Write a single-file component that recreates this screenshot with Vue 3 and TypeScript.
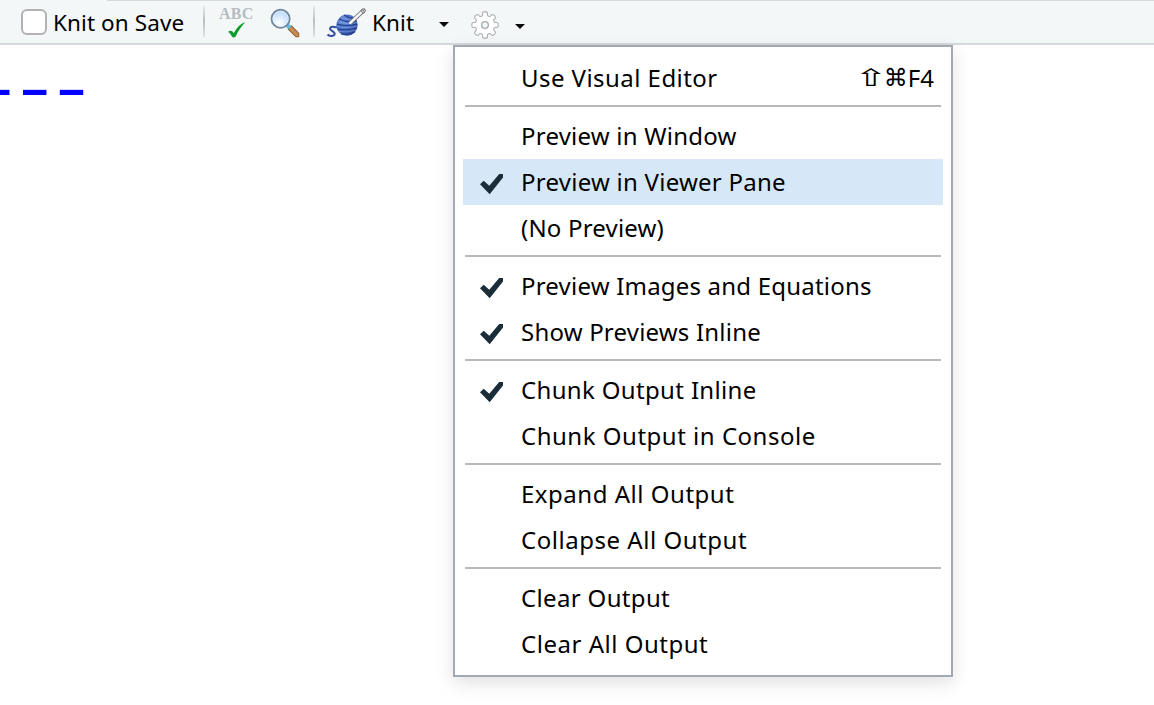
<script setup lang="ts">
interface MenuItem {
  label: string
  shortcut?: string
  checked?: boolean
  active?: boolean
  spacing: number
}

const groups: MenuItem[][] = [
  [{ label: 'Use Visual Editor', shortcut: 'F4', spacing: 0.45 }],
  [
    { label: 'Preview in Window', spacing: 0.22 },
    { label: 'Preview in Viewer Pane', checked: true, active: true, spacing: 0.25 },
    { label: '(No Preview)', spacing: 0.19 },
  ],
  [
    { label: 'Preview Images and Equations', checked: true, spacing: 0.2 },
    { label: 'Show Previews Inline', checked: true, spacing: 0.2 },
  ],
  [
    { label: 'Chunk Output Inline', checked: true, spacing: 0.34 },
    { label: 'Chunk Output in Console', spacing: 0.51 },
  ],
  [
    { label: 'Expand All Output', spacing: 0.52 },
    { label: 'Collapse All Output', spacing: 0.53 },
  ],
  [
    { label: 'Clear Output', spacing: 0.34 },
    { label: 'Clear All Output', spacing: 0.52 },
  ],
]

// Eight-toothed outline centred on the origin, with rounded teeth.
function gearPath(): string {
  let d = ''
  for (let i = 0; i < 8; i++) {
    const base = (i * Math.PI) / 4 - Math.PI / 2
    const pt = (r: number, a: number) =>
      `${(r * Math.cos(base + a)).toFixed(2)} ${(r * Math.sin(base + a)).toFixed(2)}`
    d += `${i ? 'L' : 'M'}${pt(11.2, -0.22)} Q${pt(13.1, -0.22)} ${pt(13.2, -0.08)} L${pt(13.2, 0.08)} Q${pt(13.1, 0.22)} ${pt(11.2, 0.22)} Q${pt(9.2, 0.26)} ${pt(9.6, 0.393)} Q${pt(9.2, 0.525)} ${pt(11.2, 0.565)}`
  }
  return d + 'Z'
}
const gear = gearPath()
</script>

<template>
  <div class="page">
    <header class="toolbar">
      <label class="save"><span class="box"></span><span class="tool-text save-text">Knit on Save</span></label>
      <i class="divider first"></i>
      <div class="spell">
        <span>ABC</span>
        <svg width="18" height="16" viewBox="0 0 18 16"><path d="M0 10C2.2 8 4 8.6 5.8 11.2C8.6 5.8 12 2 17.4 0C13 4.8 9.8 9.5 7.7 14.6C5.8 16 4.4 15.6 3.6 14.1C2.6 12 1.8 10.8 0 10Z" fill="#0b9b2b" /></svg>
      </div>
      <svg class="glass" width="30" height="30" viewBox="0 0 30 30">
        <defs>
          <radialGradient id="lens" cx=".4" cy=".75" r=".7"><stop offset="0" stop-color="#fff" /><stop offset="1" stop-color="#b9d9fb" /></radialGradient>
          <linearGradient id="wood" x1="0" y1="1" x2="1" y2="0"><stop offset="0" stop-color="#6b3a12" /><stop offset=".5" stop-color="#d19155" /><stop offset="1" stop-color="#7b4215" /></linearGradient>
        </defs>
        <path d="M16.5 16.5L20 20" stroke="#69bad8" stroke-width="4" />
        <path d="M18 21.2L21.5 17.7L28.8 25.2V28.8H25.8Z" fill="url(#wood)" stroke="#75401a" stroke-width=".8" />
        <path d="M18.1 20.4L20.8 17.6" stroke="#4ec5e8" stroke-width="1.5" />
        <circle cx="10.6" cy="10.8" r="9" fill="url(#lens)" stroke="#71879e" stroke-width="2" />
        <circle cx="10.6" cy="10.8" r="7.7" fill="none" stroke="#e8f4ff" stroke-width=".8" />
      </svg>
      <i class="divider second"></i>
      <svg class="yarn" width="42" height="32" viewBox="0 0 42 32">
        <defs><radialGradient id="ball" cx=".35" cy=".3" r=".8"><stop offset="0" stop-color="#7099e2" /><stop offset=".6" stop-color="#4368bd" /><stop offset="1" stop-color="#263f8c" /></radialGradient></defs>
        <path d="M1.5 27.5C4 30.3 10.2 28.5 8.4 25.8C6.6 23.6 2.4 22.7 4.6 20.4C7 18.3 9.6 21.5 13 20" fill="none" stroke="#34509f" stroke-width="2" />
        <circle cx="21" cy="18.2" r="10.6" fill="url(#ball)" />
        <path d="M13 12Q21 16 31 14M11 17Q20 20 31.5 17M11.5 22Q20 24 31 21M15 27Q22 28 29 25M18 8Q24 12 29 11" fill="none" stroke="#243f8e" stroke-width="1.1" />
        <path d="M12 14.5Q20 18 31 15.6M11 19.5Q20 22 31.5 19M13 24.5Q21 26 30 23M16 10Q22 14 29 12.6" fill="none" stroke="#7f9fdf" stroke-width=".6" />
        <path d="M24 16.3L36.4 4.5" stroke="#65696d" stroke-width="4" />
        <path d="M23.5 16.6L36.5 4.4" stroke="#f5f5f2" stroke-width="2.6" />
        <path d="M35 3.2Q37 .9 39 2.2Q39.9 4 38 6L36.6 5.8Z" fill="#eee" stroke="#4d5054" stroke-width=".9" />
        <circle cx="37.3" cy="3.6" r=".8" fill="#777" />
      </svg>
      <span class="tool-text knit-text">Knit</span>
      <i class="caret knit-caret"></i>
      <svg class="gear" width="28" height="28" viewBox="-14 -14 28 28"><path :d="gear" fill="#fff" stroke="#adb1b3" stroke-width="1.1" /><circle r="3.4" fill="#f3f7f7" stroke="#a8acae" stroke-width="1.3" /></svg>
      <i class="caret gear-caret"></i>
    </header>
    <main class="editor"><span>---</span></main>
    <nav class="menu">
      <template v-for="(group, g) in groups" :key="g">
        <hr v-if="g > 0" />
        <div v-for="item in group" :key="item.label" class="row" :class="{ active: item.active }">
          <span class="mark"><svg v-if="item.checked" width="24" height="22" viewBox="0 0 24 22"><path d="M0 11.2L3.7 7.8L9.3 12.8L19.2 1H23V4.5L9.7 21.2Z" fill="#1b2d39" /></svg></span>
          <span class="label" :style="{ letterSpacing: item.spacing + 'px' }">{{ item.label }}</span>
          <span v-if="item.shortcut" class="shortcut"><span class="shift">⇧</span><span class="cmd">⌘</span><span>{{ item.shortcut }}</span></span>
        </div>
      </template>
    </nav>
  </div>
</template>

<style>
body { margin: 0; background: #fff; }
</style>

<style scoped>
.page { position: relative; width: 1154px; height: 705px; overflow: hidden; font-family: "Noto Sans", sans-serif; color: #000; background: #fff; }
.toolbar { box-sizing: border-box; position: relative; height: 45px; display: flex; align-items: flex-start; background: #f3f7f8; border-bottom: 2px solid #d3d9dc; }
.toolbar::before { content: ""; position: absolute; left: 107px; right: 0; top: 0; height: 1px; background: #d3d9dc; }
.toolbar > * { flex: none; }
.save { display: flex; align-items: flex-start; margin-left: 21px; width: 182px; }
.box { box-sizing: border-box; width: 26px; height: 26px; margin-top: 9px; border: 2px solid #b2b2b2; border-radius: 6px; background: #fff; }
.tool-text { font-size: 22.5px; line-height: 30px; margin-top: 8px; white-space: nowrap; }
.save-text { margin-left: 6px; letter-spacing: .1px; }
.divider { width: 2px; height: 31px; margin-top: 6px; background: linear-gradient(#e6e9ea, #b9bec0 50%, #e1e5e6); }
.spell { width: 36px; margin: 5px 0 0 14px; display: flex; flex-direction: column; }
.spell span { font: bold 16px/18px "Liberation Serif", serif; color: #b5bcc2; height: 17px; letter-spacing: .3px; }
.spell svg { margin-left: 9px; }
.glass { margin: 8px 0 0 15px; }
.second { margin-left: 13px; }
.yarn { margin: 7px 0 0 11px; }
.knit-text { width: 67px; margin-left: 4px; letter-spacing: .1px; }
.caret { width: 10px; height: 5px; background: #0b0b0b; clip-path: polygon(0 0, 100% 0, 50% 100%); }
.knit-caret { margin-top: 22px; }
.gear { margin: 11px 0 0 22px; }
.gear-caret { margin: 24px 0 0 16px; }
.editor { height: 660px; }
.editor span { display: block; margin: 11px 0 0 -30px; width: max-content; font: 64px/64px "DejaVu Sans Mono", monospace; letter-spacing: -12.9px; color: #00f; transform: scaleX(1.44); transform-origin: left; }
.menu { box-sizing: border-box; position: absolute; left: 453px; top: 45px; width: 500px; height: 632px; padding: 8px; background: #fff; border: 2px solid #a2a8b4; box-shadow: 0 6px 18px rgba(0, 0, 0, .12); }
.row { height: 46px; display: flex; align-items: center; }
.active { background: #d6e8f7; }
.mark { width: 58px; height: 22px; padding-left: 17px; box-sizing: border-box; margin-top: 3px; }
.mark svg { display: block; }
.label { font-size: 24px; line-height: 46px; white-space: nowrap; }
hr { height: 2px; border: 0; margin: 4px 2px 6px; background: #b8b8b8; }
.shortcut { margin-left: auto; margin-right: 9px; display: flex; align-items: center; font-size: 24px; line-height: 46px; }
.shift { font-family: "DejaVu Sans", sans-serif; margin-right: 3px; transform: scaleX(1.65); }
.cmd { font-family: "DejaVu Sans", sans-serif; }
</style>
